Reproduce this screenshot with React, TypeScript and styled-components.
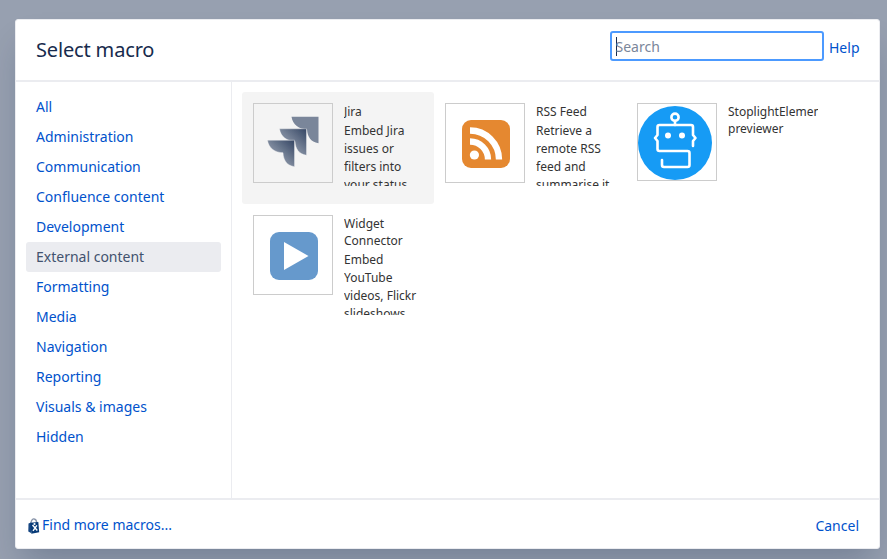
import React from 'react';
import styled, { createGlobalStyle } from 'styled-components';

const GlobalStyle = createGlobalStyle`
  * { box-sizing: border-box; }
  body {
    margin: 0;
    background: #97a0b0;
    font-family: "Noto Sans", sans-serif;
    font-size: 14px;
    line-height: 20px;
    color: #172b4d;
    overflow: hidden;
  }
`;

const Page = styled.div`
  height: 559px;
  padding: 19px 7px 10px 15px;
  overflow: hidden;
`;

const Dialog = styled.section`
  height: 530px;
  display: flex;
  flex-direction: column;
  background: #fff;
  border: 1px solid #ebecf0;
  border-radius: 3px;
  box-shadow: 0 20px 32px -8px rgba(9, 30, 66, 0.24);
`;

const Header = styled.header`
  height: 62px;
  flex: none;
  display: flex;
  align-items: flex-start;
  padding: 11px 19.5px 0 20px;
  border-bottom: 2px solid #ebecf0;
`;

const Title = styled.h2`
  margin: 4px auto 0 0;
  font-size: 20px;
  line-height: 30px;
  font-weight: 400;
  letter-spacing: -0.008em;
`;

const SearchBox = styled.div`
  width: 214px;
  height: 30px;
  display: flex;
  align-items: center;
  padding: 1px 4px 0;
  border: 2px solid #4c9aff;
  border-radius: 3px;
  color: #7a869a;
`;

const Caret = styled.span`
  width: 1px;
  height: 19px;
  margin-right: -1px;
  background: #172b4d;
`;

const Link = styled.a`
  color: #0052cc;
  text-decoration: none;
`;

const HelpLink = styled(Link)`
  margin: 7px 0 0 5.5px;
`;

const Body = styled.div`
  flex: 1;
  display: flex;
  min-height: 0;
`;

const Sidebar = styled.nav`
  width: 216px;
  padding: 10px;
  border-right: 1px solid #ebecf0;
`;

const Category = styled.a<{ $active?: boolean }>`
  display: block;
  height: 30px;
  padding: 5px 10px;
  border-radius: 3px;
  color: ${(p) => (p.$active ? '#42526e' : '#0052cc')};
  background: ${(p) => (p.$active ? '#ebecf0' : 'transparent')};
`;

const MacroGrid = styled.div`
  flex: 1;
  display: grid;
  grid-template-columns: repeat(3, 192px);
  grid-auto-rows: 112px;
  align-content: start;
  padding: 10px;
`;

const MacroCard = styled.article<{ $selected?: boolean }>`
  display: flex;
  align-items: flex-start;
  gap: 11px;
  padding: 11px;
  border-radius: 3px;
  background: ${(p) => (p.$selected ? '#f4f4f4' : 'transparent')};
`;

const Thumb = styled.div<{ $height?: number }>`
  flex: none;
  width: 80px;
  height: ${(p) => p.$height ?? 80}px;
  border: 1px solid #ccc;
  svg { display: block; }
`;

const MacroText = styled.div`
  width: 90px;
  flex: none;
  overflow: hidden;
  color: #333;
  font-size: 12px;
`;

const MacroName = styled.h3`
  margin: 0;
  font-size: 12px;
  line-height: 17px;
  font-weight: 400;
`;

const MacroDescription = styled.p`
  margin: 0;
  padding-top: 2px;
  width: 80px;
  line-height: 18px;
  max-height: 66px;
  overflow: hidden;
`;

const Footer = styled.footer`
  height: 50px;
  flex: none;
  display: flex;
  align-items: flex-start;
  justify-content: space-between;
  padding: 15px 20px 0 12px;
  border-top: 2px solid #ebecf0;
`;

const FindMore = styled(Link)`
  display: flex;
  gap: 2px;
  svg { margin-top: 3px; }
`;

const CancelLink = styled(Link)`
  margin-top: 1px;
`;

const JiraIcon = () => (
  <svg width="78" height="78" viewBox="0 0 78 78">
    <defs>
      <linearGradient id="jira-blade" x1="1" y1="0" x2="0.3" y2="0.7">
        <stop offset="0" stopColor="#344563" />
        <stop offset="0.75" stopColor="#7a869a" />
      </linearGradient>
      <filter id="jira-soft"><feGaussianBlur stdDeviation="0.75" /></filter>
      <path id="blade" d="M0 0H27V26.500C19 25 16 20 15.500 12.500C8 12.500 1 8 0 0Z" />
    </defs>
    <g filter="url(#jira-soft)">
      <use href="#blade" x="37.500" y="12.800" fill="#7a869a" />
      <use href="#blade" x="25.500" y="24.800" fill="url(#jira-blade)" stroke="#f4f4f4" strokeWidth=".4" />
      <use href="#blade" x="13.500" y="36.200" fill="url(#jira-blade)" stroke="#f4f4f4" strokeWidth=".4" />
    </g>
  </svg>
);

const RssIcon = () => (
  <svg width="78" height="78" viewBox="0 0 78 78">
    <rect x="16" y="16" width="48" height="48" rx="9" fill="#e58830" />
    <circle cx="28.4" cy="51" r="4.6" fill="#fff" />
    <path d="M24 37.5A18 18 0 0 1 42 55.5M24 26.5A29 29 0 0 1 53 55.5" fill="none" stroke="#fff" strokeWidth="6.3" />
  </svg>
);

const RobotIcon = () => (
  <svg width="74" height="76" viewBox="0 0 74 76">
    <circle cx="37" cy="39" r="37" fill="#169bf5" />
    <g fill="none" stroke="#fff" strokeWidth="2.6" strokeLinecap="round" strokeLinejoin="round">
      <circle cx="37" cy="13.200" r="3.600" />
      <path d="M37 17V21" />
      <path d="M55 42V37L57.5 34L55 31V23Q55 21 53 21H21.500Q19.500 21 19.500 23V31L17 34L19.500 37V45Q19.500 47 21.500 47H49.500Q51.500 47 51.500 49V61Q51.500 63 49.500 63H26Q24 63 24 61V56" />
    </g>
    <circle cx="30" cy="31.500" r="3" fill="#fff" />
    <circle cx="44" cy="31.500" r="3" fill="#fff" />
  </svg>
);

const PlayIcon = () => (
  <svg width="78" height="78" viewBox="0 0 78 78">
    <rect x="16" y="16" width="48" height="48" rx="9" fill="#6699cc" />
    <path d="M30 26L54.500 40L30 54Z" fill="#fff" />
  </svg>
);

const BagIcon = () => (
  <svg width="12" height="16" viewBox="0 0 12 16">
    <path d="M3 5.500C3 1.500 5 .8 6.300 1C8 1.200 8.600 3 8.800 5" fill="none" stroke="#8793a8" strokeWidth="1.300" />
    <path d="M0.500 5.500L3 4.500V15L0.300 13.500Z" fill="#174783" />
    <path d="M2.500 4.800L10.300 4L11.200 14.200L3.300 15.800Z" fill="#073a77" />
    <path d="M4.500 7L9.300 12.500M8.900 7.300L5 12.800" stroke="#fff" strokeWidth="1.400" />
    <circle cx="6.500" cy="6" r="1.100" fill="#fff" />
  </svg>
);

const categories = [
  'All', 'Administration', 'Communication', 'Confluence content', 'Development',
  'External content', 'Formatting', 'Media', 'Navigation', 'Reporting',
  'Visuals & images', 'Hidden',
];

const macros = [
  { name: 'Jira', description: 'Embed Jira issues or filters into your status', icon: <JiraIcon />, selected: true },
  { name: 'RSS Feed', description: 'Retrieve a remote RSS feed and summarise it', icon: <RssIcon /> },
  { name: 'StoplightElements previewer', icon: <RobotIcon />, height: 78 },
  { name: 'Widget Connector', description: 'Embed YouTube videos, Flickr slideshows', icon: <PlayIcon /> },
];

export default function App() {
  return (
    <Page>
      <GlobalStyle />
      <Dialog>
        <Header>
          <Title>Select macro</Title>
          <SearchBox><Caret />Search</SearchBox>
          <HelpLink>Help</HelpLink>
        </Header>
        <Body>
          <Sidebar>
            {categories.map((c) => (
              <Category key={c} $active={c === 'External content'}>{c}</Category>
            ))}
          </Sidebar>
          <MacroGrid>
            {macros.map((m) => (
              <MacroCard key={m.name} $selected={m.selected}>
                <Thumb $height={m.height}>{m.icon}</Thumb>
                <MacroText>
                  <MacroName>{m.name}</MacroName>
                  {m.description && <MacroDescription>{m.description}</MacroDescription>}
                </MacroText>
              </MacroCard>
            ))}
          </MacroGrid>
        </Body>
        <Footer>
          <FindMore><BagIcon />Find more macros...</FindMore>
          <CancelLink>Cancel</CancelLink>
        </Footer>
      </Dialog>
    </Page>
  );
}
